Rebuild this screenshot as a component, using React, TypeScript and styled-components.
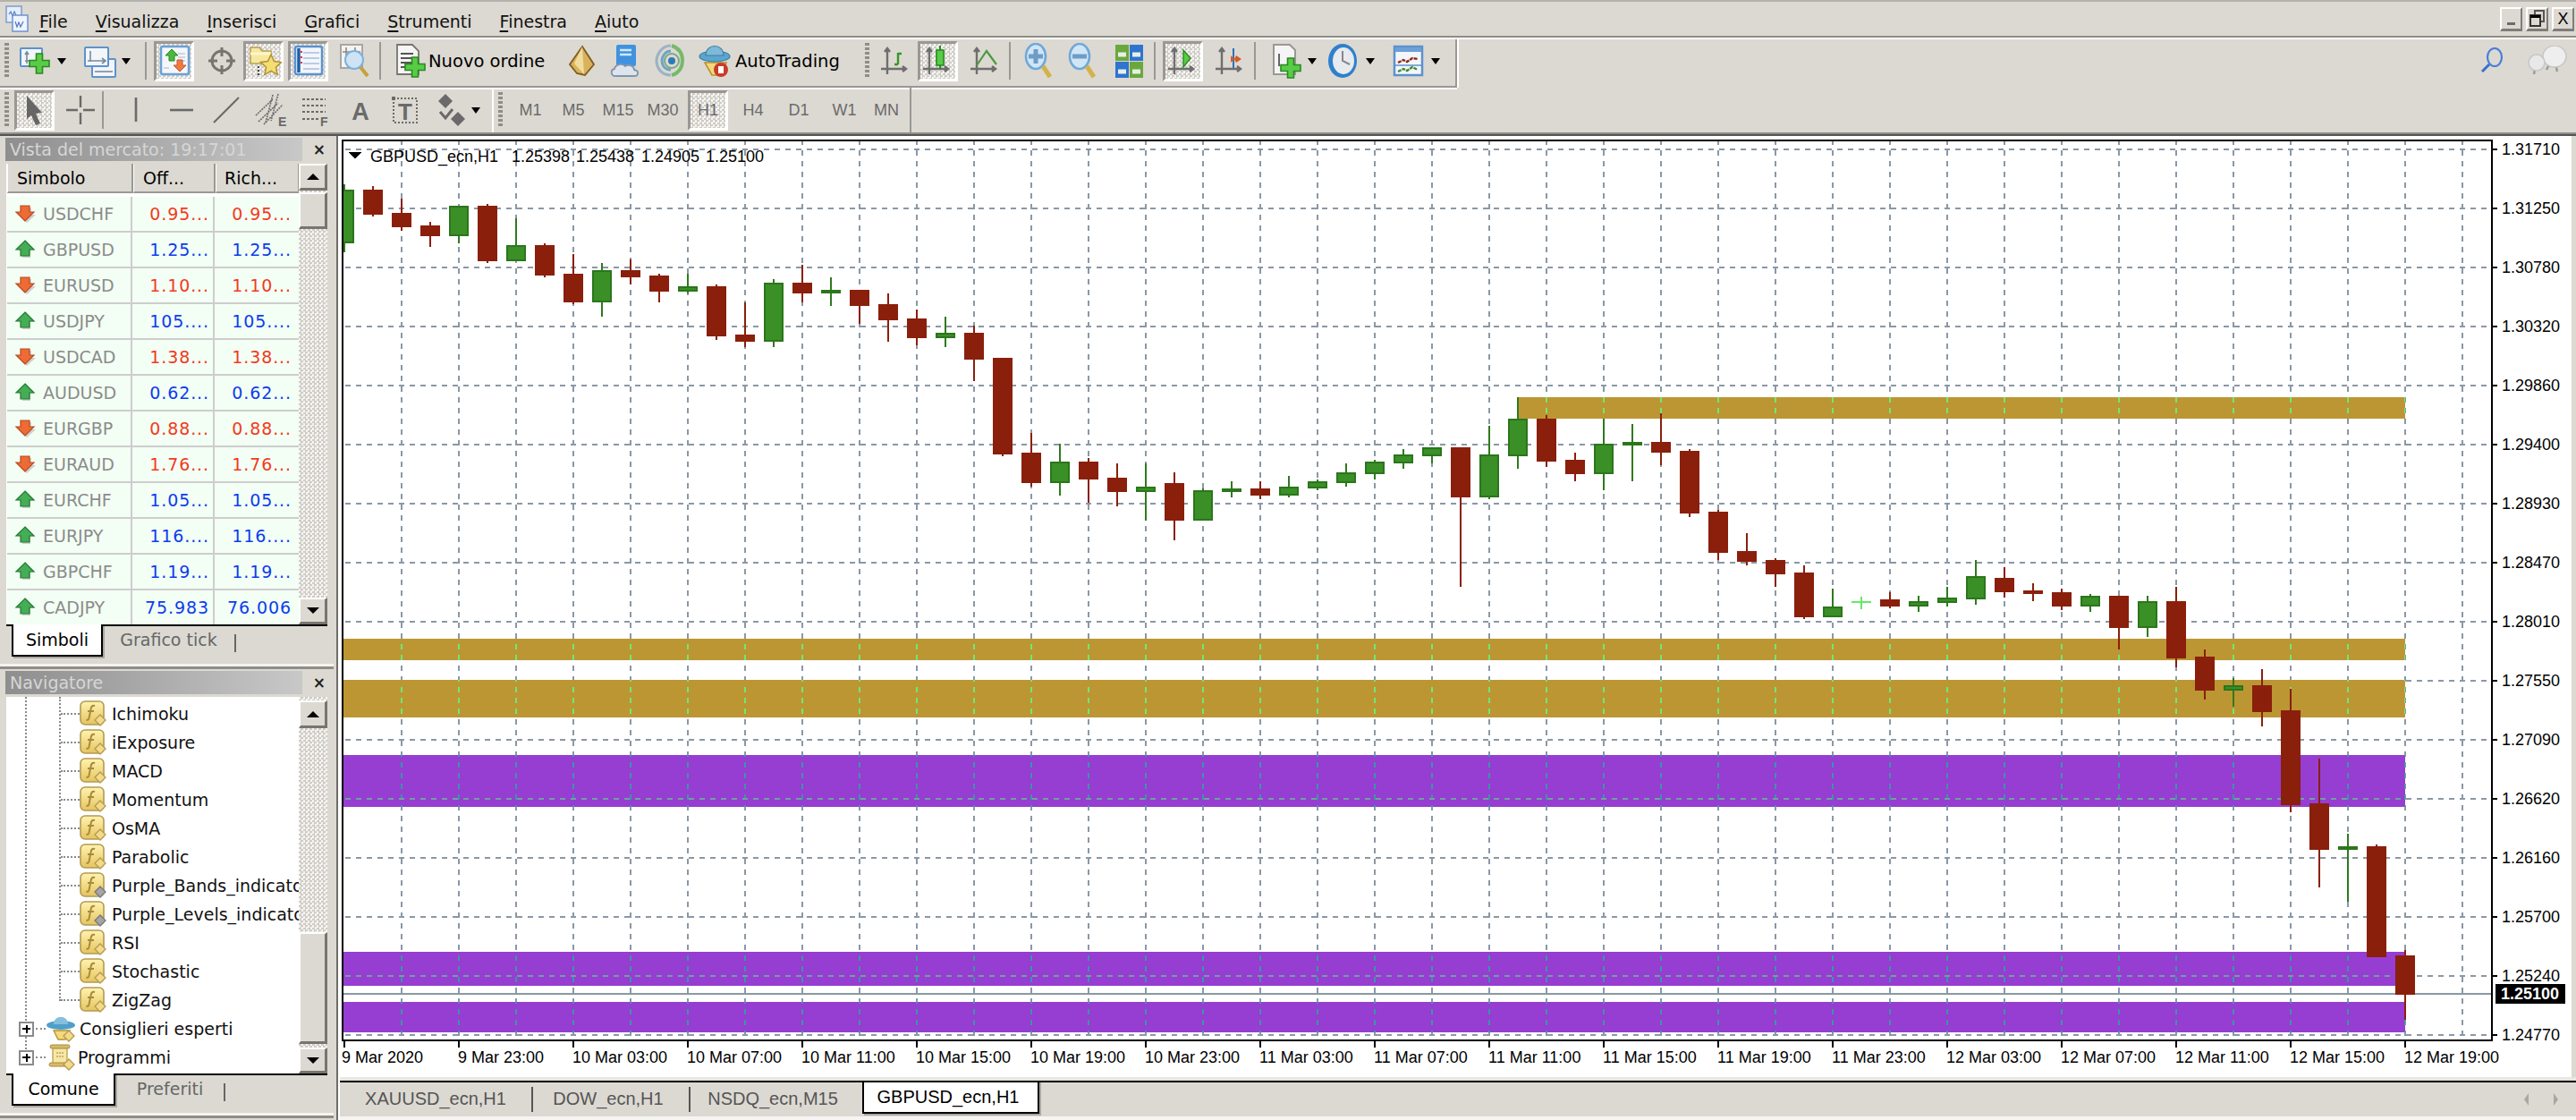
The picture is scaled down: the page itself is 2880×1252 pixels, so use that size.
import React from "react";
import styled, { createGlobalStyle } from "styled-components";

const UI = `"DejaVu Sans", "Liberation Sans", sans-serif`;
const NARROW = `"Liberation Sans", Arial, sans-serif`;
const BG = "#dcd9d2";
const CHECKER = `repeating-conic-gradient(#cfccc6 0% 25%, #f5f4f1 0% 50%) 0 0 / 5px 5px`;

const Global = createGlobalStyle`
  html, body { margin: 0; padding: 0; background: ${BG}; }
  * { box-sizing: border-box; }
`;

const Page = styled.div`
  width: 2880px; height: 1252px; overflow: hidden; background: ${BG};
  display: flex; flex-direction: column; font-family: ${UI}; font-size: 19px; color: #000;
  border-top: 2px solid #b4b2ad;
`;

const MenuBar = styled.div`
  height: 38px; flex: none; display: flex; align-items: center; position: relative;
  padding-left: 5px;
`;
const MenuList = styled.div`display: flex; gap: 31px; margin-left: 11px; padding-top: 5px;`;
const MenuItem = styled.span`
  line-height: 24px; color: #111; u { text-decoration-thickness: 2px; text-underline-offset: 3px; }
`;
const WinButtons = styled.div`margin-left: auto; display: flex; gap: 4px; margin-right: 2px;`;
const WinButton = styled.div`
  width: 25px; height: 27px; background: ${BG};
  border-top: 2px solid #fff; border-left: 2px solid #fff;
  border-right: 2px solid #7f7d79; border-bottom: 3px solid #7f7d79;
  display: flex; align-items: center; justify-content: center;
  font-family: ${NARROW}; font-size: 18px; line-height: 1;
`;

const ToolRowA = styled.div`
  height: 58px; flex: none; display: flex; align-items: flex-start;
  border-top: 2px solid #8f8d88;
  box-shadow: inset 0 2px 0 #fff;
  padding-top: 2px;
`;
const ToolBand = styled.div`
  display: flex; align-items: center; width: ${(p: { $w: number }) => p.$w}px; height: 54px;
  padding-bottom: 4px;
  border-bottom: 2px solid #9a9894; box-shadow: 0 2px 0 #fff, 2px 0 0 #fff;
  border-right: 2px solid #9a9894;
`;
const RightIcons = styled.div`margin-left: auto; display: flex; align-items: center; gap: 26px; height: 46px; margin-right: 10px;`;

const ToolRowB = styled.div`
  height: 50px; flex: none; display: flex; align-items: center;
`;
const ToolGroup = styled.div<{ $w: number; $light?: boolean }>`
  display: flex; align-items: center; height: 50px; width: ${(p) => p.$w}px;
  border-right: 2px solid ${(p) => (p.$light ? "#fff" : "#9a9894")};
`;

const Rule = styled.div`height: 4px; flex: none; border-top: 2px solid #8f8d88; border-bottom: 2px solid #555;`;

const Grip = styled.div<{ $w?: number; $ml?: number }>`
  width: ${(p) => p.$w ?? 18}px; height: 40px; flex: none; padding-left: 5px; margin-left: ${(p) => p.$ml ?? 0}px;
  &::before {
    content: ""; display: block; width: 5px; height: 100%;
    background: repeating-linear-gradient(#8f8d88 0 3px, transparent 3px 5px);
  }
`;
const Tool = styled.div<{ $w?: number; $ml?: number; $on?: boolean; $pl?: number }>`
  width: ${(p) => p.$w ?? 44}px; height: 45px; margin-left: ${(p) => p.$ml ?? 0}px; flex: none;
  display: flex; align-items: center;
  justify-content: ${(p) => (p.$pl !== undefined ? "flex-start" : "center")};
  padding-left: ${(p) => p.$pl ?? 0}px;
  ${(p) =>
    p.$on
      ? `background: ${CHECKER}; border-top: 3px solid #9a9894; border-left: 3px solid #9a9894; border-right: 3px solid #fff; border-bottom: 3px solid #fff;`
      : ""}
`;
const ToolLabel = styled.span<{ $ml: number }>`margin-left: ${(p) => p.$ml}px; white-space: nowrap; color: #000; font-size: 19.5px;`;
const Frame = styled.span`
  font-family: ${NARROW}; font-size: 18px; color: #6b6b6b;
`;
const Sep = styled.div<{ $ml?: number }>`
  width: 10px; margin-left: ${(p) => p.$ml ?? 0}px; height: 42px; flex: none; display: flex; justify-content: center;
  &::before { content: ""; width: 2px; background: #9a9894; }
`;
const Drop = styled.i<{ $ml: number }>`
  flex: none; margin-left: ${(p) => p.$ml}px; width: 0; height: 0;
  border-left: 5px solid transparent; border-right: 5px solid transparent; border-top: 7px solid #000;
`;
const Svg = styled.svg`flex: none; display: block;`;

const Main = styled.div`flex: 1; min-height: 0; display: flex;`;
const Sidebar = styled.div`
  width: 380px; flex: none; display: flex; flex-direction: column;
  border-right: 2px solid #fff;
  box-shadow: inset -2px 0 0 #6f6d69;
  padding-right: 5px;
`;
const Panel = styled.div<{ $h: number }>`
  height: ${(p) => p.$h}px; flex: none; display: flex; flex-direction: column; padding: 2px 9px 0 7px;
  border-bottom: 3px solid #8f8d88;
  box-shadow: inset 0 -3px 0 #f4f3ef;
`;
const TitleRow = styled.div`height: 26px; flex: none; display: flex; align-items: center;`;
const TitleBar = styled.div`
  width: 334px; height: 26px; display: flex; align-items: center; padding-left: 5px; margin-left: -1px;
  background: linear-gradient(90deg, #8e8e8e, #c8c8c8);
  color: #d6d6d6; font-size: 19px; white-space: nowrap; overflow: hidden;
`;
const CloseX = styled.span`margin-left: 12px; font-size: 17px; font-weight: 700; color: #222; line-height: 1;`;
const Body = styled.div<{ $h: number; $mt: number }>`
  height: ${(p) => p.$h}px; margin-top: ${(p) => p.$mt}px; flex: none; display: flex; background: #fff;
`;
const ListSide = styled.div`width: 327px; flex: none; display: flex; flex-direction: column; overflow: hidden; background: #fff;`;
const ListHead = styled.div`
  display: grid; grid-template-columns: 141px 92px 94px; height: 33px; flex: none; background: ${BG}; margin-left: 1px;
  margin-bottom: 4px;
`;
const HeadCell = styled.div`
  display: flex; align-items: center; padding-left: ${(p: { $pl: number }) => p.$pl}px;
  border-right: 2px solid #9a9894; border-bottom: 2px solid #9a9894; border-left: 1px solid #fff;
`;
const Row = styled.div`
  display: grid; grid-template-columns: 140px 92px 95px; height: 40px; flex: none; background: #f3fff4;
  margin-left: 1px; border-bottom: 2px solid #cdcdcd;
`;
const SymCell = styled.div`
  display: flex; align-items: center; padding-left: 8px; gap: 8px; color: #8b8b8b; border-right: 2px solid #cdcdcd;
`;
const PriceCell = styled.div<{ $up: boolean; $last?: boolean }>`
  display: flex; align-items: center; justify-content: flex-end; padding-right: ${(p) => (p.$last ? 9 : 4)}px;
  letter-spacing: 0.9px; font-size: 19px;
  color: ${(p) => (p.$up ? "#0c3cf0" : "#f23a1e")};
  border-right: ${(p) => (p.$last ? "none" : "2px solid #cdcdcd")};
`;
const Scroll = styled.div`width: 32px; flex: none; display: flex; flex-direction: column; background: ${CHECKER};`;
const ScrollBtn = styled.div<{ $h: number; $mt?: string }>`
  height: ${(p) => p.$h}px; flex: none; margin-top: ${(p) => p.$mt ?? 0}; background: ${BG};
  border-top: 2px solid #fff; border-left: 2px solid #fff; border-right: 3px solid #77756f; border-bottom: 3px solid #77756f;
  display: flex; align-items: center; justify-content: center;
`;
const Tri = styled.i<{ $down?: boolean }>`
  width: 0; height: 0; border-left: 7px solid transparent; border-right: 7px solid transparent;
  ${(p) => (p.$down ? "border-top: 7px solid #000;" : "border-bottom: 7px solid #000;")}
`;
const Tree = styled.div`
  width: 327px; flex: none; position: relative; overflow: hidden; padding-top: 3px; background: #fff; padding-left: 1px;
`;
const VDots = styled.i<{ $x: number; $h: number }>`
  position: absolute; left: ${(p) => p.$x}px; top: 0; height: ${(p) => p.$h}px; width: 0;
  border-left: 2px dotted #8a8a8a;
`;
const TreeRow = styled.div<{ $pl: number }>`
  height: 32px; display: flex; align-items: center; padding-left: ${(p) => p.$pl}px; white-space: nowrap; color: #111;
`;
const HDots = styled.i<{ $w: number }>`flex: none; width: ${(p) => p.$w}px; border-top: 2px dotted #8a8a8a;`;
const PlusBox = styled.i`
  flex: none; width: 17px; height: 17px; border: 2px solid #8a8a8a; background: #fff; position: relative; margin-right: 2px;
  &::before { content: ""; position: absolute; left: 2px; right: 2px; top: 5.5px; height: 2px; background: #000; }
  &::after { content: ""; position: absolute; top: 2px; bottom: 2px; left: 5.5px; width: 2px; background: #000; }
`;
const TreeLabel = styled.span<{ $ml: number }>`margin-left: ${(p) => p.$ml}px;`;

const SideTabs = styled.div`
  height: 36px; flex: none; display: flex; border-top: 2px solid #000; align-items: flex-start; padding-left: 6px; width: 359px;
`;
const SideTab = styled.div<{ $w: number; $active?: boolean; $ml?: number }>`
  width: ${(p) => p.$w}px; margin-left: ${(p) => p.$ml ?? 0}px; flex: none; height: ${(p) => (p.$active ? 36 : 30)}px;
  display: flex; align-items: center; justify-content: center;
  ${(p) =>
    p.$active
      ? `margin-top: -2px; background: #fff; color: #000; border: 2px solid #000; border-top: none; box-shadow: 2px 2px 0 #a9a7a2;`
      : `color: #666;`}
`;
const TabDivider = styled.i<{ $ml: number }>`
  flex: none; width: 2px; height: 20px; margin-top: 9px; margin-left: ${(p) => p.$ml}px; background: #666;
`;

const ChartCol = styled.div`flex: 1; min-width: 0; display: flex; flex-direction: column;`;
const ChartWrap = styled.div`
  height: 1052px; flex: none; width: 2495px; background: #fff;
`;
const ChartSvg = styled.svg`display: block;`;
const BottomTabs = styled.div`
  height: 44px; flex: none; margin-top: 4px; border-top: 2px solid #000; display: flex; align-items: flex-start;
  font-family: ${NARROW}; font-size: 20px; position: relative; border-bottom: 4px solid #f6f5f2;
  box-shadow: 0 -4px 0 #e9e7e2;
`;
const BTab = styled.div<{ $w: number; $active?: boolean; $pr?: number }>`
  width: ${(p) => p.$w}px; flex: none; display: flex; align-items: center; justify-content: center;
  padding-right: ${(p) => p.$pr ?? 0}px;
  ${(p) =>
    p.$active
      ? `height: 37px; margin-top: -2px; background: #fff; color: #000; border: 2px solid #000; border-top: 2px solid #000; box-shadow: 2px 2px 0 #a9a7a2;`
      : `height: 36px; color: #555;`}
`;
const BDivider = styled.i`flex: none; width: 2px; height: 28px; margin-top: 5px; background: #555;`;
const BArrows = styled.div`
  position: absolute; right: 20px; top: 12px; display: flex; gap: 28px; color: #a9a7a2;
`;
const BArrow = styled.i<{ $right?: boolean }>`
  width: 0; height: 0; border-top: 7px solid transparent; border-bottom: 7px solid transparent;
  ${(p) => (p.$right ? "border-left: 5px solid #a9a7a2;" : "border-right: 5px solid #a9a7a2;")}
`;

/* ---------- icons ---------- */
const G_F = "#59cc47", G_S = "#2a8a20";
const plusD = (x: number, y: number, a = 11, b = 3.5) =>
  `M${x - b} ${y - a}h${2 * b}v${a - b}h${a - b}v${2 * b}h${-(a - b)}v${a - b}h${-2 * b}v${-(a - b)}h${-(a - b)}v${-2 * b}h${a - b}z`;
const Plus = ({ x, y }: { x: number; y: number }) => (
  <path d={plusD(x, y)} fill={G_F} stroke={G_S} strokeWidth="1.6" />
);
const I = ({ w = 40, h = 40, children }: { w?: number; h?: number; children: React.ReactNode }) => (
  <Svg width={w} height={h} viewBox={`0 0 ${w} ${h}`}>{children}</Svg>
);
const Win = ({ x, y, w, h, f = "#f2f5fa" }: { x: number; y: number; w: number; h: number; f?: string }) => (
  <rect x={x} y={y} width={w} height={h} fill={f} stroke="#5c92cc" strokeWidth="2" rx="1" />
);
const LogoIcon = () => (
  <I w={28} h={30}>
    <rect x="2" y="1" width="17" height="18" fill="#e6eefc" stroke="#7d9ccc" strokeWidth="1.5" />
    <path d="M5 10l2-3 2 5 2-5 2 4" fill="none" stroke="#5d7fb8" strokeWidth="1.2" />
    <rect x="9" y="11" width="17" height="18" fill="#eef4ff" stroke="#6c93d0" strokeWidth="1.5" />
    <path d="M12 18l2 6 2-5 2 5 3-6" fill="none" stroke="#4f78bd" strokeWidth="1.2" />
  </I>
);
const NewChartIcon = () => (
  <I>
    <Win x={3} y={6} w={24} h={20} />
    <path d="M10 10v13M8 13l2-3 2 3M8 20h14" stroke="#7b8a99" strokeWidth="1.6" fill="none" />
    <Plus x={24} y={23} />
  </I>
);
const ProfileIcon = () => (
  <I>
    <Win x={11} y={18} w={26} h={20} />
    <Win x={3} y={5} w={26} h={21} />
    <path d="M9 9v12M6 20h20M22 17l4 3-4 3" stroke="#7b8a99" strokeWidth="1.6" fill="none" />
    <path d="M14 32h20" stroke="#7b8a99" strokeWidth="1.6" />
  </I>
);
const MarketIcon = () => (
  <I>
    <rect x="5" y="4" width="31" height="31" fill="#f3f6fb" stroke="#6ba0d6" strokeWidth="2.5" rx="2" />
    <path d="M24 12h8M24 16h8M24 20h8M8 28h6" stroke="#c6ccd4" strokeWidth="1.5" />
    <path d="M17 7l7 7h-4v6h-6v-6h-4z" fill="#4cb83e" stroke="#2a8a20" strokeWidth="1" />
    <path d="M26 32l7-7h-4v-6h-6v6h-4z" fill="#ee7a43" stroke="#c7562a" strokeWidth="1" />
  </I>
);
const DataWinIcon = () => (
  <I>
    <circle cx="20" cy="20" r="11" fill="none" stroke="#77756f" strokeWidth="3" />
    <path d="M20 5v10M20 25v10M5 20h10M25 20h10" stroke="#77756f" strokeWidth="3" />
  </I>
);
const NavigatorIcon = () => (
  <I>
    <path d="M5 5h10l3 4h10v14H5z" fill="#f6e8a0" stroke="#b7a05a" strokeWidth="1.6" />
    <path d="M5 12h23" stroke="#fff6c8" strokeWidth="3" />
    <path d="M14 26v12" stroke="#444" strokeWidth="2" strokeDasharray="2 2" />
    <path d="M28 13l3.5 7.6 8 1-6 5.6 1.6 8.2-7.1-4.1-7.1 4.1 1.6-8.2-6-5.6 8-1z" fill="#f3de72" stroke="#b38f33" strokeWidth="1.5" />
  </I>
);
const TerminalIcon = () => (
  <I>
    <rect x="5" y="4" width="30" height="31" fill="#f3f6fb" stroke="#5c92cc" strokeWidth="2.5" rx="2" />
    <path d="M9 6v27" stroke="#1d5fa8" strokeWidth="3.5" />
    <path d="M14 11h18M14 17h18M14 23h18M14 29h18" stroke="#a9bedb" strokeWidth="1.6" />
    <path d="M12 9v2M12 15v2M12 21v2" stroke="#e33" strokeWidth="2" />
  </I>
);
const TesterIcon = () => (
  <I>
    <rect x="3" y="2" width="24" height="26" fill="#f4f3ef" stroke="#a8a6a2" strokeWidth="2" />
    <path d="M9 5v16M19 5v16M5 10h20" stroke="#8b8b8b" strokeWidth="1.6" />
    <circle cx="18" cy="19" r="10" fill="#cfe3f4" stroke="#7db2de" strokeWidth="2" />
    <path d="M25 27l8 10" stroke="#c5a041" strokeWidth="4" />
  </I>
);
const OrderIcon = () => (
  <I w={36} h={40}>
    <path d="M2 2h17l7 7v26H2z" fill="#f5f5f5" stroke="#77756f" strokeWidth="1.8" />
    <path d="M6 12h14M6 17h14M6 22h12M6 27h10" stroke="#555" strokeWidth="1.8" />
    <Plus x={22} y={27} />
  </I>
);
const EditorIcon = () => (
  <I>
    <path d="M21 4l13 20-10 12-9-2-8-10z" fill="#d9b25e" stroke="#7f5c1c" strokeWidth="1.8" />
    <path d="M21 4L12 23l11 12z" fill="#f1dc9d" />
  </I>
);
const CloudIcon = () => (
  <I>
    <rect x="9" y="2" width="22" height="24" fill="#3f93de" rx="2" />
    <path d="M13 8h13M13 13h13" stroke="#cfe7fb" strokeWidth="2.4" />
    <path d="M8 37c-5 0-6-7-1-8 1-5 9-7 12-3 4-3 10 0 10 4 6 1 5 7 0 7z" fill="#dde4ec" stroke="#8096ad" strokeWidth="1.8" />
  </I>
);
const SignalIcon = () => (
  <I>
    <path d="M20 36C8 36 4 26 4 20S9 3 20 3" fill="none" stroke="#9ab3c4" strokeWidth="3" />
    <path d="M20 30c-7 0-10-5-10-10s4-11 10-11" fill="none" stroke="#6da4c4" strokeWidth="3" />
    <path d="M21 3c9 3 12 10 12 17s-4 14-12 16" fill="none" stroke="#76b96a" strokeWidth="4" />
    <circle cx="21" cy="20" r="4" fill="#2b7bb8" />
    <circle cx="21" cy="20" r="8" fill="none" stroke="#7aa889" strokeWidth="2" />
  </I>
);
const HatIcon = () => (
  <I>
    <path d="M9 22l8 14h9l7-14z" fill="#f3d97c" stroke="#b69330" strokeWidth="1.6" />
    <ellipse cx="20" cy="15" rx="17" ry="6" fill="#5aa6cf" stroke="#3e7ea3" strokeWidth="1.2" />
    <path d="M10 14c0-14 20-14 20 0z" fill="#7fb9d8" stroke="#3e7ea3" strokeWidth="1.2" />
    <circle cx="27" cy="30" r="8" fill="#c83c28" />
    <rect x="24" y="26" width="6" height="8" fill="#fff" />
  </I>
);
const Axes = () => (
  <path d="M10 6v29M7 10l3-4 3 4M3 29h28M27 26l4 3-4 3" stroke="#6e6e6e" strokeWidth="2.4" fill="none" />
);
const BarIcon = () => (
  <I>
    <Axes />
    <path d="M22 24V11M18 24h4M22 12h4" stroke="#39962a" strokeWidth="2.4" fill="none" />
  </I>
);
const CandleIcon = () => (
  <I>
    <Axes />
    <path d="M22 3v26" stroke="#2a8a20" strokeWidth="2" />
    <rect x="18" y="8" width="8" height="17" fill={G_F} stroke={G_S} strokeWidth="1.6" />
  </I>
);
const LineIcon = () => (
  <I>
    <Axes />
    <path d="M10 25l11-16 11 15" stroke="#4d9a3e" strokeWidth="2.2" fill="none" />
  </I>
);
const MagIcon = ({ minus }: { minus?: boolean }) => (
  <I>
    <ellipse cx="16" cy="15" rx="11" ry="14" fill="#cfe6f6" stroke="#6fa9d8" strokeWidth="2.6" />
    <path d="M24 26l8 12" stroke="#d4b24a" strokeWidth="5" />
    <path d={minus ? "M8 15h16" : "M8 15h16M16 7v16"} stroke="#6f9cc7" strokeWidth="5" />
  </I>
);
const TileIcon = () => (
  <I>
    <rect x="5" y="2" width="15" height="18" fill="#6aa83c" />
    <rect x="21" y="2" width="15" height="18" fill="#2f74cf" />
    <rect x="5" y="21" width="15" height="18" fill="#2f74cf" />
    <rect x="21" y="21" width="15" height="18" fill="#6aa83c" />
    <path d="M8 13h9M24 13h9M8 32h9M24 32h9" stroke="#e6f0e6" strokeWidth="5" />
  </I>
);
const AutoIcon = () => (
  <I>
    <Axes />
    <path d="M20 8v19l8-10z" fill={G_F} stroke={G_S} strokeWidth="1.4" />
  </I>
);
const ShiftIcon = () => (
  <I>
    <Axes />
    <path d="M23 6v22" stroke="#2e72b2" strokeWidth="2" />
    <path d="M20 14l4 4-4 4zM26 14l6 4-6 4-2-4z" fill="#d85a20" />
  </I>
);
const IndicatorIcon = () => (
  <I w={36} h={40}>
    <path d="M2 2h18l6 6v27H2z" fill="#f5f5f5" stroke="#9a9894" strokeWidth="2" />
    <path d="M8 12v14" stroke="#666" strokeWidth="2" />
    <Plus x={21} y={28} />
  </I>
);
const ClockIcon = () => (
  <I w={36} h={40}>
    <ellipse cx="17" cy="20" rx="16" ry="19" fill="#2f80cc" />
    <ellipse cx="18" cy="20" rx="12" ry="15" fill="#e7eaee" />
    <path d="M17 9v11l8 4" stroke="#888" strokeWidth="2" fill="none" />
  </I>
);
const TemplateIcon = () => (
  <I w={36} h={40}>
    <rect x="2" y="4" width="31" height="32" fill="#f3f6fb" stroke="#5c92cc" strokeWidth="2.5" />
    <rect x="3" y="5" width="29" height="5" fill="#6da0d8" />
    <path d="M6 22l6-3 4 2 6-4 6 1" stroke="#8a2a10" strokeWidth="2.4" fill="none" strokeDasharray="4 1" />
    <path d="M6 32l6-3 4 2 6-4 6 3" stroke="#3e8a2a" strokeWidth="2.4" fill="none" strokeDasharray="4 1" />
    <path d="M3 25h29" stroke="#5c92cc" strokeWidth="1.5" />
  </I>
);
const SearchIcon = () => (
  <I w={28} h={28}>
    <ellipse cx="17" cy="11" rx="8" ry="10" fill="none" stroke="#4a7fd8" strokeWidth="2.2" />
    <path d="M11 19l-8 8" stroke="#3a6fd0" strokeWidth="3" />
  </I>
);
const ChatIcon = () => (
  <I w={44} h={32}>
    <path d="M31 20l2 9M24 21l-3 6" stroke="#9b9b9b" strokeWidth="2.5" />
    <ellipse cx="30" cy="12" rx="13" ry="12" fill="#eeeeee" stroke="#c6c6c6" strokeWidth="1.5" />
    <path d="M8 26l-1 6" stroke="#9b9b9b" strokeWidth="2.5" />
    <ellipse cx="10" cy="19" rx="9" ry="9" fill="#e8e8e8" stroke="#c6c6c6" strokeWidth="1.5" />
  </I>
);
const CursorIcon = () => (
  <I>
    <path d="M11 4l17 19-7 1 5 11-5 2-5-11-5 4z" fill="#666" />
  </I>
);
const T2 = "#6a6a6a";
const CrossIcon = () => (
  <I>
    <path d="M20 4v13M20 23v13M4 20h13M23 20h13" stroke={T2} strokeWidth="2.4" />
  </I>
);
const VLineIcon = () => <I><path d="M20 6v27" stroke={T2} strokeWidth="2.6" /></I>;
const HLineIcon = () => <I><path d="M6 20h26" stroke={T2} strokeWidth="2.6" /></I>;
const TrendIcon = () => <I><path d="M6 34L34 6" stroke={T2} strokeWidth="2" /></I>;
const ChannelIcon = () => (
  <I>
    <path d="M3 26L22 8M6 33L28 12M12 36L33 14M22 3l-8 31M28 2l-8 30" stroke={T2} strokeWidth="1.6" strokeDasharray="2 1" fill="none" />
    <text x="28" y="38" fontSize="14" fontWeight="700" fontFamily={NARROW} fill={T2}>E</text>
  </I>
);
const FiboIcon = () => (
  <I>
    <path d="M6 8h26M6 15h26M6 22h26M6 30h18" stroke={T2} strokeWidth="2" strokeDasharray="3 2" />
    <text x="26" y="38" fontSize="14" fontWeight="700" fontFamily={NARROW} fill={T2}>F</text>
  </I>
);
const AIcon = () => (
  <I><text x="20" y="31" textAnchor="middle" fontSize="27" fontWeight="700" fontFamily={NARROW} fill={T2}>A</text></I>
);
const TIcon = () => (
  <I>
    <rect x="7" y="7" width="26" height="27" fill="none" stroke={T2} strokeWidth="2" strokeDasharray="2 2" />
    <rect x="5" y="5" width="4" height="4" fill={T2} />
    <text x="20" y="31" textAnchor="middle" fontSize="26" fontFamily={NARROW} fontWeight="700" fill={T2}>T</text>
  </I>
);
const ArrowsIcon = () => (
  <I>
    <path d="M14 2l8 8-8 8-8-8z" fill={T2} />
    <path d="M28 22l8 8-8 8-8-8z" fill={T2} />
    <path d="M8 22l6 7 8-10" stroke={T2} strokeWidth="3" fill="none" />
  </I>
);
const TrendArrow = ({ up }: { up: boolean }) => (
  <Svg width={24} height={24} viewBox="0 0 24 24">
    {up ? (
      <>
        <path d="M14 4l9 9h-5v8H9v-8H4z" fill="#cfcfcf" />
        <path d="M12 2l10 10h-5v7H7v-7H2z" fill="#45ad55" stroke="#227a33" strokeWidth="1.2" />
      </>
    ) : (
      <>
        <path d="M14 22l-9-9h5V5h9v8h5z" fill="#cfcfcf" />
        <path d="M12 20L2 10h5V3h10v7h5z" fill="#ee6b36" stroke="#b84a1e" strokeWidth="1.2" />
      </>
    )}
  </Svg>
);
const FuncIcon = ({ gray }: { gray?: boolean }) => (
  <Svg width={30} height={30} viewBox="0 0 30 30">
    <defs>
      <linearGradient id="fg" x1="0" x2="0" y1="0" y2="1">
        <stop offset="0" stopColor="#fff3b0" />
        <stop offset="1" stopColor="#e5c460" />
      </linearGradient>
    </defs>
    <rect x="1" y="1" width="26" height="26" rx="5" fill="url(#fg)" stroke="#b49a4e" strokeWidth="1.6" />
    <path d="M17 6c-3-1-4 1-4.500 4l-2 10c-.5 2-2 2-3 1.500M9 12h7" stroke="#a88a3a" strokeWidth="2" fill="none" />
    <path d="M23 16l6 6-6 6-6-6z" fill={gray ? "#a5a5a5" : "#f3d98a"} stroke={gray ? "#777" : "#b49a4e"} strokeWidth="1.3" />
  </Svg>
);
const ExpertIcon = () => (
  <Svg width={34} height={30} viewBox="0 0 34 30">
    <path d="M9 17l5 10h8l5-10z" fill="#f3d97c" stroke="#b69330" strokeWidth="1.4" />
    <ellipse cx="17" cy="11" rx="16" ry="5" fill="#4f9fcb" />
    <path d="M9 10c0-11 16-11 16 0z" fill="#86bfdc" />
    <path d="M26 17l6 6-6 6-6-6z" fill="#f3d98a" stroke="#b49a4e" strokeWidth="1.3" />
  </Svg>
);
const ScriptIcon = () => (
  <Svg width={34} height={30} viewBox="0 0 34 30">
    <rect x="5" y="1" width="22" height="4" rx="2" fill="#d6bc6a" stroke="#a98b36" strokeWidth="1" />
    <rect x="8" y="5" width="16" height="18" fill="#f6e7a8" stroke="#b9a04c" strokeWidth="1.3" />
    <rect x="4" y="21" width="22" height="4" rx="2" fill="#d6bc6a" stroke="#a98b36" strokeWidth="1" />
    <path d="M12 10h8M12 14h8" stroke="#c2a656" strokeWidth="1.6" strokeDasharray="2 1" />
    <path d="M26 17l6 6-6 6-6-6z" fill="#f3d98a" stroke="#b49a4e" strokeWidth="1.3" />
  </Svg>
);

/* ---------- data ---------- */
const QUOTES: [string, boolean, string, string][] = [
  ["USDCHF", false, "0.95...", "0.95..."],
  ["GBPUSD", true, "1.25...", "1.25..."],
  ["EURUSD", false, "1.10...", "1.10..."],
  ["USDJPY", true, "105....", "105...."],
  ["USDCAD", false, "1.38...", "1.38..."],
  ["AUDUSD", true, "0.62...", "0.62..."],
  ["EURGBP", false, "0.88...", "0.88..."],
  ["EURAUD", false, "1.76...", "1.76..."],
  ["EURCHF", true, "1.05...", "1.05..."],
  ["EURJPY", true, "116....", "116...."],
  ["GBPCHF", true, "1.19...", "1.19..."],
  ["CADJPY", true, "75.983", "76.006"],
];
const INDICATORS: [string, boolean?][] = [
  ["Ichimoku"], ["iExposure"], ["MACD"], ["Momentum"], ["OsMA"], ["Parabolic"],
  ["Purple_Bands_indicator", true], ["Purple_Levels_indicator", true], ["RSI"], ["Stochastic"], ["ZigZag"],
];
const PRICES = ["1.31710", "1.31250", "1.30780", "1.30320", "1.29860", "1.29400", "1.28930", "1.28470",
  "1.28010", "1.27550", "1.27090", "1.26620", "1.26160", "1.25700", "1.25240", "1.24770"];
const TIMES = ["9 Mar 2020", "9 Mar 23:00", "10 Mar 03:00", "10 Mar 07:00", "10 Mar 11:00", "10 Mar 15:00",
  "10 Mar 19:00", "10 Mar 23:00", "11 Mar 03:00", "11 Mar 07:00", "11 Mar 11:00", "11 Mar 15:00", "11 Mar 19:00",
  "11 Mar 23:00", "12 Mar 03:00", "12 Mar 07:00", "12 Mar 11:00", "12 Mar 15:00", "12 Mar 19:00"];
const LEGEND: [number, string][] = [[414, "GBPUSD_ecn,H1"], [572, "1.25398"], [644, "1.25438"], [717, "1.24905"], [789, "1.25100"]];

type C = ["R" | "G" | "L", number, number, number, number];
const rawZ: C[] = [
  ["G",185,202,369,397],["R",190,202,279,285],["R",230,274,318,329],["R",302,314,346,381],["G",252,252,346,369],
  ["R",246,252,425,430],["G",291,376,425,425],["R",370,375,470,476],["R",403,465,553,560],["G",431,454,553,598],
  ["R",419,454,476,498],["R",465,470,520,553],["G",465,504,520,525],["R",498,504,661,672],["R",553,655,678,694],
  ["G",482,493,678,694],["R",437,493,526,554],["G",476,515,526,566],["R",515,515,566,622],["R",526,560,610,678],
  ["R",577,605,666,689],["G",599,650,666,694],["R",627,650,734,801],["R",728,728,1030,1036],["R",963,1025,1119,1131],
  ["G",997,1053,1119,1159],["R",1042,1053,1109,1182],["R",1058,1103,1148,1192],["G",1058,1131,1148,1238],
  ["R",1086,1120,1238,1299],["G",1137,1142,1238,1238],["G",1114,1137,1148,1165],["R",1114,1137,1159,1170],
  ["G",1098,1131,1159,1165],["G",1109,1114,1137,1142],["G",1058,1086,1120,1131],["G",1047,1053,1092,1109],
  ["G",1014,1030,1058,1075],["G",1008,1008,1036,1058],["R",1008,1008,1165,1445],["G",941,1030,1165,1170],
  ["G",851,918,1036,1075],["R",907,918,1053,1070],["R",1025,1047,1092,1114],["G",918,997,1092,1142],
  ["G",935,991,1002,1114],["R",902,991,1025,1064],["R",1014,1019,1215,1226],["R",1204,1210,1338,1362],
  ["R",1277,1333,1366,1378],["R",1355,1361,1406,1445],["R",1378,1400,1540,1546],["G",1450,1506,1540,1540],
  ["L",1475,1491,1493,1515],["R",1462,1484,1506,1512],["G",1473,1490,1506,1523],["G",1445,1478,1495,1506],
  ["G",1361,1411,1484,1501],["R",1383,1417,1462,1478],["R",1434,1456,1467,1490],["R",1450,1462,1506,1517],
  ["G",1467,1473,1506,1523],
];
const rawPx: C[] = [
  ["R",666,666,702,726],["G",666,672,702,712],["R",656,672,736,746],["R",726,734,772,782],["G",758,766,772,790],
  ["R",748,766,796,812],["R",770,794,900,908],["R",848,898,950,992],["G",932,946,950,1008],["R",944,946,1070,1070],
  ["R",1062,1068,1112,1140],
];
const CANDLES: C[] = [
  ...rawZ.map((c) => [c[0], 140 + c[1] / 2.8, 140 + c[2] / 2.8, 140 + c[3] / 2.8, 140 + c[4] / 2.8] as C),
  ...rawPx,
].map((c) => [c[0], Math.round(c[1]), Math.round(c[2]), Math.round(c[3]), Math.round(c[4])] as C);

const BANDS: [number, number, number, string][] = [
  [1697, 444, 468, "gold"], [384, 714, 738, "gold"], [384, 760, 802, "gold"],
  [384, 844, 902, "purple"], [384, 1064, 1102, "purple"], [384, 1120, 1154, "purple"],
];
const GOLD = "#bc9632", PURPLE = "#963dd2", GRID = "#8a98a6";

const Grid = ({ v, h, clip }: { v: string; h: string; clip?: string }) => (
  <g clipPath={clip ? `url(#${clip})` : undefined}>
    {Array.from({ length: 37 }, (_, k) => (
      <line key={k} x1={449 + 64 * k} x2={449 + 64 * k} y1={156} y2={1162} stroke={v} strokeWidth="2" strokeDasharray="6 6" />
    ))}
    {PRICES.map((_, k) => (
      <line key={k} x1={386} x2={2785} y1={167 + 66 * k} y2={167 + 66 * k} stroke={h} strokeWidth="2" strokeDasharray="6 6" />
    ))}
  </g>
);

const Chart = () => (
  <ChartSvg width={2495} height={1052} viewBox="380 152 2495 1052" shapeRendering="crispEdges" fontFamily={NARROW} fontSize="18">
    <defs>
      <clipPath id="plot"><rect x="384" y="158" width="2401" height="1004" /></clipPath>
      <clipPath id="goldClip">{BANDS.filter((b) => b[3] === "gold").map((b, i) => (
        <rect key={i} x={b[0]} y={b[1]} width={2689 - b[0]} height={b[2] - b[1]} />))}</clipPath>
      <clipPath id="purpleClip">{BANDS.filter((b) => b[3] === "purple").map((b, i) => (
        <rect key={i} x={b[0]} y={b[1]} width={2689 - b[0]} height={b[2] - b[1]} />))}</clipPath>
    </defs>
    <Grid v={GRID} h={GRID} />
    {BANDS.map((b, i) => (
      <rect key={i} x={b[0]} y={b[1]} width={2689 - b[0]} height={b[2] - b[1]} fill={b[3] === "gold" ? GOLD : PURPLE} />
    ))}
    <Grid v="#6fe878" h={GOLD} clip="goldClip" />
    <Grid v="#3a95a6" h="#6fa0a2" clip="purpleClip" />
    <line x1="384" x2="2785" y1="1111" y2="1111" stroke={GRID} strokeWidth="2" />
    <g clipPath="url(#plot)">
      {CANDLES.map((c, i) => {
        const x = 385 + 32 * i;
        const [kind, wt, bt, bb, wb] = c;
        if (kind === "L")
          return (
            <g key={i} stroke="#66e866" strokeWidth="2">
              <line x1={x} x2={x} y1={wt} y2={wb} />
              <line x1={x - 11} x2={x + 11} y1={bt} y2={bt} />
            </g>
          );
        const w = kind === "G" ? "#2f7a1e" : "#8a1f0c";
        return (
          <g key={i}>
            <line x1={x} x2={x} y1={wt} y2={wb} stroke={w} strokeWidth="2" />
            {kind === "G" ? (
              <rect x={x - 10} y={bt + 1} width={20} height={Math.max(bb - bt - 2, 1)} fill="#3a8f26" stroke="#2b761c" strokeWidth="2" />
            ) : (
              <rect x={x - 11} y={bt} width={22} height={bb - bt} fill="#8a1f0c" />
            )}
          </g>
        );
      })}
    </g>
    <rect x="383" y="157" width="2403" height="1006" fill="none" stroke="#000" strokeWidth="2.4" />
    <path d="M390 170h14l-7 8z" fill="#000" />
    {LEGEND.map(([x, t]) => (
      <text key={t} x={x} y="181">{t}</text>
    ))}
    {PRICES.map((p, k) => (
      <g key={p}>
        <line x1="2786" x2="2792" y1={167 + 66 * k} y2={167 + 66 * k} stroke="#000" strokeWidth="2" />
        <text x="2797" y={173 + 66 * k}>{p}</text>
      </g>
    ))}
    <rect x="2790" y="1100" width="78" height="22" fill="#000" />
    <text x="2796" y="1117" fill="#fff" fontWeight="700">1.25100</text>
    {TIMES.map((t, k) => (
      <g key={t}>
        <line x1={385 + 128 * k} x2={385 + 128 * k} y1="1163" y2="1171" stroke="#000" strokeWidth="2" />
        <text x={k === 0 ? 382 : 385 + 128 * k - 1} y="1188">{t}</text>
      </g>
    ))}
  </ChartSvg>
);

export default function App() {
  return (
    <Page>
      <Global />
      <MenuBar>
        <LogoIcon />
        <MenuList>
          {["File", "Visualizza", "Inserisci", "Grafici", "Strumenti", "Finestra", "Aiuto"].map((m) => (
            <MenuItem key={m}><u>{m[0]}</u>{m.slice(1)}</MenuItem>
          ))}
        </MenuList>
        <WinButtons>
          <WinButton><Svg width={12} height={16} viewBox="0 0 12 16"><rect x="1" y="12" width="9" height="3" fill="#6d6b67" /></Svg></WinButton>
          <WinButton><Svg width={18} height={20} viewBox="0 0 18 20"><rect x="6" y="1" width="10" height="12" fill="none" stroke="#555" strokeWidth="2" /><rect x="1" y="6" width="11" height="12" fill={BG} stroke="#333" strokeWidth="2" /><rect x="1" y="6" width="11" height="3" fill="#000" /></Svg></WinButton>
          <WinButton>X</WinButton>
        </WinButtons>
      </MenuBar>
      <ToolRowA>
        <ToolBand $w={1629}>
          <Grip />
          <Tool $w={70} $pl={2}><NewChartIcon /><Drop $ml={4} /></Tool>
          <Tool $w={70} $pl={4}><ProfileIcon /><Drop $ml={4} /></Tool>
          <Sep />
          <Tool $w={45} $ml={4} $on><MarketIcon /></Tool>
          <Tool $w={45} $ml={8}><DataWinIcon /></Tool>
          <Tool $w={45} $ml={2} $on><NavigatorIcon /></Tool>
          <Tool $w={45} $ml={5} $on><TerminalIcon /></Tool>
          <Tool $w={45} $ml={8}><TesterIcon /></Tool>
          <Sep />
          <Tool $w={180} $ml={2} $pl={10}><OrderIcon /><ToolLabel $ml={1}>Nuovo ordine</ToolLabel></Tool>
          <Tool $ml={16}><EditorIcon /></Tool>
          <Tool $ml={6}><CloudIcon /></Tool>
          <Tool $ml={6}><SignalIcon /></Tool>
          <Tool $w={169} $ml={4} $pl={3}><HatIcon /><ToolLabel $ml={3}>AutoTrading</ToolLabel></Tool>
          <Grip $w={14} $ml={17} />
          <Tool $ml={4}><BarIcon /></Tool>
          <Tool $w={45} $ml={2} $on><CandleIcon /></Tool>
          <Tool $ml={9}><LineIcon /></Tool>
          <Sep />
          <Tool $ml={6}><MagIcon /></Tool>
          <Tool $ml={5}><MagIcon minus /></Tool>
          <Tool $ml={7}><TileIcon /></Tool>
          <Sep $ml={2} />
          <Tool $w={45} $ml={4} $on><AutoIcon /></Tool>
          <Tool $ml={9}><ShiftIcon /></Tool>
          <Sep />
          <Tool $w={66} $ml={4} $pl={10}><IndicatorIcon /><Drop $ml={4} /></Tool>
          <Tool $w={68} $pl={6}><ClockIcon /><Drop $ml={7} /></Tool>
          <Tool $w={70} $pl={11}><TemplateIcon /><Drop $ml={7} /></Tool>
        </ToolBand>
        <RightIcons>
          <SearchIcon />
          <ChatIcon />
        </RightIcons>
      </ToolRowA>
      <ToolRowB>
        <ToolGroup $w={552} $light>
          <Grip $w={16} />
          <Tool $w={45} $on><CursorIcon /></Tool>
          <Tool $w={40} $ml={9}><CrossIcon /></Tool>
          <Sep $ml={0} />
          <Tool $ml={10}><VLineIcon /></Tool>
          <Tool $ml={8}><HLineIcon /></Tool>
          <Tool $ml={5}><TrendIcon /></Tool>
          <Tool $ml={6}><ChannelIcon /></Tool>
          <Tool $ml={5}><FiboIcon /></Tool>
          <Tool $ml={7}><AIcon /></Tool>
          <Tool $ml={6}><TIcon /></Tool>
          <Tool $w={58} $ml={9} $pl={0}><ArrowsIcon /><Drop $ml={3} /></Tool>
        </ToolGroup>
        <ToolGroup $w={467}>
          <Grip $w={18} />
          <Tool $w={46}><Frame>M1</Frame></Tool>
          <Tool $w={50}><Frame>M5</Frame></Tool>
          <Tool $w={50}><Frame>M15</Frame></Tool>
          <Tool $w={50}><Frame>M30</Frame></Tool>
          <Tool $w={45} $ml={3} $on><Frame>H1</Frame></Tool>
          <Tool $w={52} $ml={2}><Frame>H4</Frame></Tool>
          <Tool $w={50}><Frame>D1</Frame></Tool>
          <Tool $w={50} $ml={1}><Frame>W1</Frame></Tool>
          <Tool $w={44}><Frame>MN</Frame></Tool>
        </ToolGroup>
      </ToolRowB>
      <Rule />
      <Main>
        <Sidebar>
          <Panel $h={596}>
            <TitleRow>
              <TitleBar>Vista del mercato: 19:17:01</TitleBar>
              <CloseX>×</CloseX>
            </TitleRow>
            <Body $h={515} $mt={3}>
              <ListSide>
                <ListHead>
                  <HeadCell $pl={10}>Simbolo</HeadCell>
                  <HeadCell $pl={10}>Off...</HeadCell>
                  <HeadCell $pl={9}>Rich...</HeadCell>
                </ListHead>
                {QUOTES.map(([s, up, a, b]) => (
                  <Row key={s}>
                    <SymCell><TrendArrow up={up} />{s}</SymCell>
                    <PriceCell $up={up}>{a}</PriceCell>
                    <PriceCell $up={up} $last>{b}</PriceCell>
                  </Row>
                ))}
              </ListSide>
              <Scroll>
                <ScrollBtn $h={30}><Tri /></ScrollBtn>
                <ScrollBtn $h={41} $mt="2px" />
                <ScrollBtn $h={30} $mt="auto"><Tri $down /></ScrollBtn>
              </Scroll>
            </Body>
            <SideTabs>
              <SideTab $w={102} $active>Simboli</SideTab>
              <SideTab $w={147}>Grafico tick</SideTab>
              <TabDivider $ml={0} />
            </SideTabs>
          </Panel>
          <Panel $h={502}>
            <TitleRow>
              <TitleBar>Navigatore</TitleBar>
              <CloseX>×</CloseX>
            </TitleRow>
            <Body $h={421} $mt={3}>
              <Tree>
                <VDots $x={21} $h={410} />
                <VDots $x={59} $h={340} />
                {INDICATORS.map(([n, gray]) => (
                  <TreeRow key={n} $pl={60}>
                    <HDots $w={21} />
                    <FuncIcon gray={gray} />
                    <TreeLabel $ml={6}>{n}</TreeLabel>
                  </TreeRow>
                ))}
                <TreeRow $pl={13}>
                  <PlusBox /><HDots $w={11} /><ExpertIcon /><TreeLabel $ml={4}>Consiglieri esperti</TreeLabel>
                </TreeRow>
                <TreeRow $pl={13}>
                  <PlusBox /><HDots $w={11} /><ScriptIcon /><TreeLabel $ml={2}>Programmi</TreeLabel>
                </TreeRow>
              </Tree>
              <Scroll>
                <ScrollBtn $h={31} $mt="4px"><Tri /></ScrollBtn>
                <ScrollBtn $h={125} $mt="auto" />
                <ScrollBtn $h={29} $mt="4px"><Tri $down /></ScrollBtn>
              </Scroll>
            </Body>
            <SideTabs>
              <SideTab $w={116} $active>Comune</SideTab>
              <SideTab $w={112} $ml={5}>Preferiti</SideTab>
              <TabDivider $ml={4} />
            </SideTabs>
          </Panel>
        </Sidebar>
        <ChartCol>
          <ChartWrap><Chart /></ChartWrap>
          <BottomTabs>
            <BTab $w={214}>XAUUSD_ecn,H1</BTab>
            <BDivider />
            <BTab $w={174} $pr={6}>DOW_ecn,H1</BTab>
            <BDivider />
            <BTab $w={192} $pr={8}>NSDQ_ecn,M15</BTab>
            <BTab $w={198} $active $pr={6}>GBPUSD_ecn,H1</BTab>
            <BArrows><BArrow /><BArrow $right /></BArrows>
          </BottomTabs>
        </ChartCol>
      </Main>
    </Page>
  );
}
